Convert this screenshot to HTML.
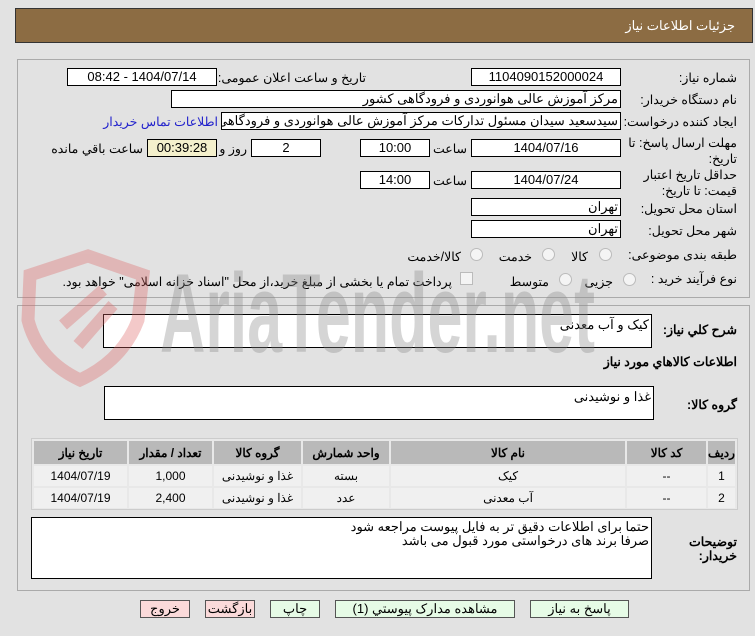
<!DOCTYPE html>
<html><head><meta charset="utf-8"><style>
body{margin:0;width:755px;height:636px;background:#e2e2e2;font-family:"Liberation Sans","Noto Sans CJK SC",sans-serif;font-size:12px;color:#000;position:relative;overflow:hidden}
.a{position:absolute;white-space:nowrap}
.b{position:absolute;background:#fff;border:1px solid #000;box-sizing:border-box;font-size:13px;line-height:16px;text-align:center;direction:rtl;overflow:hidden;white-space:nowrap}
.l{position:absolute;direction:rtl;text-align:right;font-size:12.5px;white-space:nowrap}
.r{text-align:right;padding-right:2px}
.rad{position:absolute;width:11px;height:11px;border:1px solid #bbb;border-radius:50%;background:#f4f4f4}
table{border-collapse:separate;border-spacing:2px}
td,th{font-size:12px;text-align:center;height:20px;padding:0}
th{background:#b9b9b9;height:23px}
td{background:#f0f0f0}
.btn{position:absolute;top:600px;height:18px;border:1px solid #555;box-sizing:border-box;font-size:13px;text-align:center;line-height:16px;background:#e6fbe6;direction:rtl}
.red{background:#fbdada}
</style></head><body>
<div class="a" style="left:15px;top:8px;width:738px;height:35px;background:#8c6c43;border:1px solid #333;box-sizing:border-box"></div>
<div class="l" style="right:20px;top:18px;color:#fff;font-size:13px">جزئیات اطلاعات نیاز</div>

<div class="a" style="left:17px;top:59px;width:733px;height:239px;border:1px solid #aaa;box-sizing:border-box"></div>
<div class="a" style="left:17px;top:305px;width:733px;height:286px;border:1px solid #aaa;box-sizing:border-box"></div>

<!-- row1 -->
<div class="l" style="right:18px;top:70px">شماره نیاز:</div>
<div class="b" style="left:471px;top:68px;width:150px;height:18px">1104090152000024</div>
<div class="l" style="right:389px;top:70px">تاریخ و ساعت اعلان عمومی:</div>
<div class="b" style="left:67px;top:68px;width:150px;height:18px">1404/07/14 - 08:42</div>
<div class="l" style="right:18px;top:92px">نام دستگاه خریدار:</div>
<div class="b r" style="left:171px;top:90px;width:450px;height:18px">مرکز آموزش عالی هوانوردی و فرودگاهی کشور</div>
<div class="l" style="right:18px;top:114px">ایجاد کننده درخواست:</div>
<div class="b r" style="left:221px;top:112px;width:400px;height:18px">سیدسعید سیدان مسئول تدارکات مرکز آموزش عالی هوانوردی و فرودگاهی کشور</div>
<div class="l" style="right:537px;top:114px;color:#2222cc">اطلاعات تماس خریدار</div>
<div class="l" style="right:18px;top:135px;line-height:16px">مهلت ارسال پاسخ: تا<br>تاریخ:</div>
<div class="b" style="left:471px;top:139px;width:150px;height:18px">1404/07/16</div>
<div class="l" style="right:288px;top:141px">ساعت</div>
<div class="b" style="left:360px;top:139px;width:70px;height:18px">10:00</div>
<div class="b" style="left:251px;top:139px;width:70px;height:18px">2</div>
<div class="l" style="right:508px;top:141px">روز و</div>
<div class="b" style="left:147px;top:139px;width:70px;height:18px;background:#f4f0cc">00:39:28</div>
<div class="l" style="right:612px;top:141px">ساعت باقي مانده</div>
<div class="l" style="right:18px;top:167px;line-height:16px">حداقل تاریخ اعتبار<br>قیمت: تا تاریخ:</div>
<div class="b" style="left:471px;top:171px;width:150px;height:18px">1404/07/24</div>
<div class="l" style="right:288px;top:173px">ساعت</div>
<div class="b" style="left:360px;top:171px;width:70px;height:18px">14:00</div>
<div class="l" style="right:18px;top:201px">استان محل تحویل:</div>
<div class="b r" style="left:471px;top:198px;width:150px;height:18px">تهران</div>
<div class="l" style="right:18px;top:223px">شهر محل تحویل:</div>
<div class="b r" style="left:471px;top:220px;width:150px;height:18px">تهران</div>
<div class="l" style="right:18px;top:247px">طبقه بندی موضوعی:</div>
<div class="rad" style="left:599px;top:248px"></div><div class="l" style="right:167px;top:249px">کالا</div>
<div class="rad" style="left:542px;top:248px"></div><div class="l" style="right:223px;top:249px">خدمت</div>
<div class="rad" style="left:470px;top:248px"></div><div class="l" style="right:294px;top:249px">کالا/خدمت</div>
<div class="l" style="right:18px;top:271px">نوع فرآیند خرید :</div>
<div class="rad" style="left:623px;top:273px"></div><div class="l" style="right:142px;top:274px">جزیی</div>
<div class="rad" style="left:559px;top:273px"></div><div class="l" style="right:206px;top:274px">متوسط</div>
<div class="a" style="left:460px;top:272px;width:11px;height:11px;border:1px solid #bbb;background:#f4f4f4"></div>
<div class="l" style="right:303px;top:274px">پرداخت تمام یا بخشی از مبلغ خرید،از محل "اسناد خزانه اسلامی" خواهد بود.</div>

<!-- section 2 -->
<div class="l" style="right:18px;top:322px;font-weight:bold">شرح کلي نياز:</div>
<div class="b r" style="left:103px;top:314px;width:549px;height:34px;text-align:right;padding-top:2px">کیک و آب معدنی</div>
<div class="l" style="right:18px;top:354px;font-weight:bold">اطلاعات کالاهاي مورد نياز</div>
<div class="l" style="right:18px;top:397px;font-weight:bold">گروه کالا:</div>
<div class="b r" style="left:104px;top:386px;width:550px;height:34px;padding-top:2px">غذا و نوشیدنی</div>
<div class="a" style="left:31px;top:438px;width:707px;height:72px;border:1px solid #ccc;box-sizing:border-box;background:#e8e8e8">
<table dir="rtl" style="width:705px;margin-top:0">
<tr><th style="width:27px">ردیف</th><th style="width:79px">کد کالا</th><th style="width:234px">نام کالا</th><th style="width:86px">واحد شمارش</th><th style="width:87px">گروه کالا</th><th style="width:83px">تعداد / مقدار</th><th>تاریخ نیاز</th></tr>
<tr><td>1</td><td>--</td><td>کیک</td><td>بسته</td><td>غذا و نوشیدنی</td><td>1,000</td><td>1404/07/19</td></tr>
<tr><td>2</td><td>--</td><td>آب معدنی</td><td>عدد</td><td>غذا و نوشیدنی</td><td>2,400</td><td>1404/07/19</td></tr>
</table></div>
<div class="l" style="right:18px;top:535px;font-weight:bold;line-height:14px">توضیحات<br>خریدار:</div>
<div class="b r" style="left:31px;top:517px;width:621px;height:62px;line-height:14px;padding-top:2px">حتما برای اطلاعات دقیق تر به فایل پیوست مراجعه شود<br>صرفا برند های درخواستی مورد قبول می باشد</div>

<div class="btn red" style="left:140px;width:50px">خروج</div>
<div class="btn red" style="left:205px;width:50px">بازگشت</div>
<div class="btn" style="left:270px;width:50px">چاپ</div>
<div class="btn" style="left:335px;width:180px">مشاهده مدارک پیوستي (1)</div>
<div class="btn" style="left:530px;width:99px">پاسخ به نياز</div>

<!-- watermark overlay -->
<svg class="a" style="left:0;top:240px;pointer-events:none" width="640" height="160" viewBox="0 0 640 160"><g opacity="0.35"><path d="M30 35 L88 16 L143 35 L138 80 Q123 120 80 140 Q38 120 28 80 Z" fill="none" stroke="#d66" stroke-width="13"/><path d="M63 85 L103 50 M78 105 L113 65" stroke="#d66" stroke-width="12"/><text x="160" y="112" font-family="Liberation Sans" font-weight="bold" font-size="112" fill="#888" textLength="435" lengthAdjust="spacingAndGlyphs">AriaTender.net</text></g></svg>
</body></html>
